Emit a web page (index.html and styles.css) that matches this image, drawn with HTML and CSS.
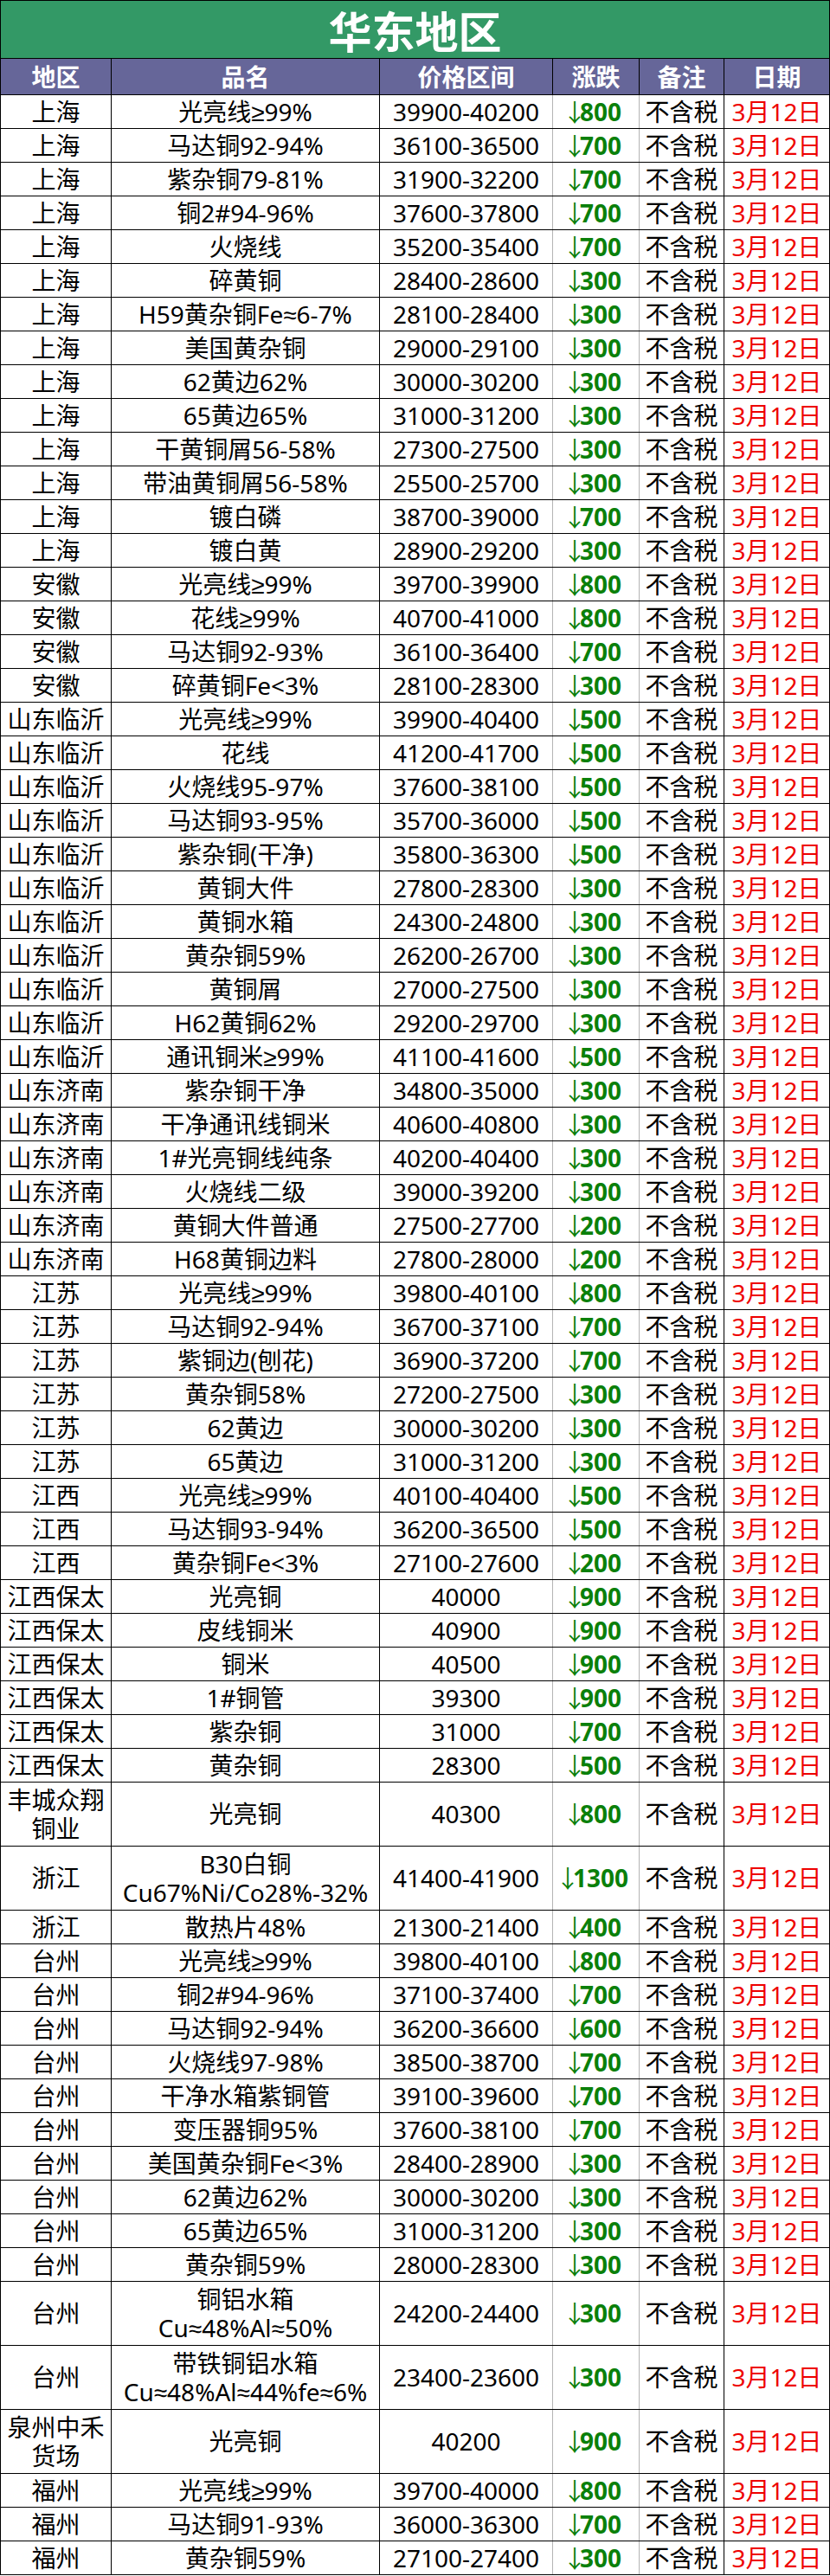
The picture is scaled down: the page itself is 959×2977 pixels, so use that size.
FILE: index.html
```html
<!DOCTYPE html>
<html lang="zh-CN">
<head>
<meta charset="utf-8">
<title>华东地区</title>
<link rel="stylesheet" href="styles.css">
</head>
<body>
<div class="sheet">
  <div class="title">华东地区</div>
  <div class="row head"><div class="c">地区</div><div class="c">品名</div><div class="c">价格区间</div><div class="c">涨跌</div><div class="c">备注</div><div class="c">日期</div></div>

  <div class="row"><div class="c">上海</div><div class="c">光亮线≥99%</div><div class="c">39900-40200</div><div class="c chg"><span class="arr">↓</span>800</div><div class="c">不含税</div><div class="c date">3月12日</div></div>
  <div class="row"><div class="c">上海</div><div class="c">马达铜92-94%</div><div class="c">36100-36500</div><div class="c chg"><span class="arr">↓</span>700</div><div class="c">不含税</div><div class="c date">3月12日</div></div>
  <div class="row"><div class="c">上海</div><div class="c">紫杂铜79-81%</div><div class="c">31900-32200</div><div class="c chg"><span class="arr">↓</span>700</div><div class="c">不含税</div><div class="c date">3月12日</div></div>
  <div class="row"><div class="c">上海</div><div class="c">铜2#94-96%</div><div class="c">37600-37800</div><div class="c chg"><span class="arr">↓</span>700</div><div class="c">不含税</div><div class="c date">3月12日</div></div>
  <div class="row"><div class="c">上海</div><div class="c">火烧线</div><div class="c">35200-35400</div><div class="c chg"><span class="arr">↓</span>700</div><div class="c">不含税</div><div class="c date">3月12日</div></div>
  <div class="row"><div class="c">上海</div><div class="c">碎黄铜</div><div class="c">28400-28600</div><div class="c chg"><span class="arr">↓</span>300</div><div class="c">不含税</div><div class="c date">3月12日</div></div>
  <div class="row"><div class="c">上海</div><div class="c">H59黄杂铜Fe≈6-7%</div><div class="c">28100-28400</div><div class="c chg"><span class="arr">↓</span>300</div><div class="c">不含税</div><div class="c date">3月12日</div></div>
  <div class="row"><div class="c">上海</div><div class="c">美国黄杂铜</div><div class="c">29000-29100</div><div class="c chg"><span class="arr">↓</span>300</div><div class="c">不含税</div><div class="c date">3月12日</div></div>
  <div class="row"><div class="c">上海</div><div class="c">62黄边62%</div><div class="c">30000-30200</div><div class="c chg"><span class="arr">↓</span>300</div><div class="c">不含税</div><div class="c date">3月12日</div></div>
  <div class="row"><div class="c">上海</div><div class="c">65黄边65%</div><div class="c">31000-31200</div><div class="c chg"><span class="arr">↓</span>300</div><div class="c">不含税</div><div class="c date">3月12日</div></div>
  <div class="row"><div class="c">上海</div><div class="c">干黄铜屑56-58%</div><div class="c">27300-27500</div><div class="c chg"><span class="arr">↓</span>300</div><div class="c">不含税</div><div class="c date">3月12日</div></div>
  <div class="row"><div class="c">上海</div><div class="c">带油黄铜屑56-58%</div><div class="c">25500-25700</div><div class="c chg"><span class="arr">↓</span>300</div><div class="c">不含税</div><div class="c date">3月12日</div></div>
  <div class="row"><div class="c">上海</div><div class="c">镀白磷</div><div class="c">38700-39000</div><div class="c chg"><span class="arr">↓</span>700</div><div class="c">不含税</div><div class="c date">3月12日</div></div>
  <div class="row"><div class="c">上海</div><div class="c">镀白黄</div><div class="c">28900-29200</div><div class="c chg"><span class="arr">↓</span>300</div><div class="c">不含税</div><div class="c date">3月12日</div></div>

  <div class="row"><div class="c">安徽</div><div class="c">光亮线≥99%</div><div class="c">39700-39900</div><div class="c chg"><span class="arr">↓</span>800</div><div class="c">不含税</div><div class="c date">3月12日</div></div>
  <div class="row"><div class="c">安徽</div><div class="c">花线≥99%</div><div class="c">40700-41000</div><div class="c chg"><span class="arr">↓</span>800</div><div class="c">不含税</div><div class="c date">3月12日</div></div>
  <div class="row"><div class="c">安徽</div><div class="c">马达铜92-93%</div><div class="c">36100-36400</div><div class="c chg"><span class="arr">↓</span>700</div><div class="c">不含税</div><div class="c date">3月12日</div></div>
  <div class="row"><div class="c">安徽</div><div class="c">碎黄铜Fe&lt;3%</div><div class="c">28100-28300</div><div class="c chg"><span class="arr">↓</span>300</div><div class="c">不含税</div><div class="c date">3月12日</div></div>

  <div class="row"><div class="c">山东临沂</div><div class="c">光亮线≥99%</div><div class="c">39900-40400</div><div class="c chg"><span class="arr">↓</span>500</div><div class="c">不含税</div><div class="c date">3月12日</div></div>
  <div class="row"><div class="c">山东临沂</div><div class="c">花线</div><div class="c">41200-41700</div><div class="c chg"><span class="arr">↓</span>500</div><div class="c">不含税</div><div class="c date">3月12日</div></div>
  <div class="row"><div class="c">山东临沂</div><div class="c">火烧线95-97%</div><div class="c">37600-38100</div><div class="c chg"><span class="arr">↓</span>500</div><div class="c">不含税</div><div class="c date">3月12日</div></div>
  <div class="row"><div class="c">山东临沂</div><div class="c">马达铜93-95%</div><div class="c">35700-36000</div><div class="c chg"><span class="arr">↓</span>500</div><div class="c">不含税</div><div class="c date">3月12日</div></div>
  <div class="row"><div class="c">山东临沂</div><div class="c">紫杂铜(干净)</div><div class="c">35800-36300</div><div class="c chg"><span class="arr">↓</span>500</div><div class="c">不含税</div><div class="c date">3月12日</div></div>
  <div class="row"><div class="c">山东临沂</div><div class="c">黄铜大件</div><div class="c">27800-28300</div><div class="c chg"><span class="arr">↓</span>300</div><div class="c">不含税</div><div class="c date">3月12日</div></div>
  <div class="row"><div class="c">山东临沂</div><div class="c">黄铜水箱</div><div class="c">24300-24800</div><div class="c chg"><span class="arr">↓</span>300</div><div class="c">不含税</div><div class="c date">3月12日</div></div>
  <div class="row"><div class="c">山东临沂</div><div class="c">黄杂铜59%</div><div class="c">26200-26700</div><div class="c chg"><span class="arr">↓</span>300</div><div class="c">不含税</div><div class="c date">3月12日</div></div>
  <div class="row"><div class="c">山东临沂</div><div class="c">黄铜屑</div><div class="c">27000-27500</div><div class="c chg"><span class="arr">↓</span>300</div><div class="c">不含税</div><div class="c date">3月12日</div></div>
  <div class="row"><div class="c">山东临沂</div><div class="c">H62黄铜62%</div><div class="c">29200-29700</div><div class="c chg"><span class="arr">↓</span>300</div><div class="c">不含税</div><div class="c date">3月12日</div></div>
  <div class="row"><div class="c">山东临沂</div><div class="c">通讯铜米≥99%</div><div class="c">41100-41600</div><div class="c chg"><span class="arr">↓</span>500</div><div class="c">不含税</div><div class="c date">3月12日</div></div>

  <div class="row"><div class="c">山东济南</div><div class="c">紫杂铜干净</div><div class="c">34800-35000</div><div class="c chg"><span class="arr">↓</span>300</div><div class="c">不含税</div><div class="c date">3月12日</div></div>
  <div class="row"><div class="c">山东济南</div><div class="c">干净通讯线铜米</div><div class="c">40600-40800</div><div class="c chg"><span class="arr">↓</span>300</div><div class="c">不含税</div><div class="c date">3月12日</div></div>
  <div class="row"><div class="c">山东济南</div><div class="c">1#光亮铜线纯条</div><div class="c">40200-40400</div><div class="c chg"><span class="arr">↓</span>300</div><div class="c">不含税</div><div class="c date">3月12日</div></div>
  <div class="row"><div class="c">山东济南</div><div class="c">火烧线二级</div><div class="c">39000-39200</div><div class="c chg"><span class="arr">↓</span>300</div><div class="c">不含税</div><div class="c date">3月12日</div></div>
  <div class="row"><div class="c">山东济南</div><div class="c">黄铜大件普通</div><div class="c">27500-27700</div><div class="c chg"><span class="arr">↓</span>200</div><div class="c">不含税</div><div class="c date">3月12日</div></div>
  <div class="row"><div class="c">山东济南</div><div class="c">H68黄铜边料</div><div class="c">27800-28000</div><div class="c chg"><span class="arr">↓</span>200</div><div class="c">不含税</div><div class="c date">3月12日</div></div>

  <div class="row"><div class="c">江苏</div><div class="c">光亮线≥99%</div><div class="c">39800-40100</div><div class="c chg"><span class="arr">↓</span>800</div><div class="c">不含税</div><div class="c date">3月12日</div></div>
  <div class="row"><div class="c">江苏</div><div class="c">马达铜92-94%</div><div class="c">36700-37100</div><div class="c chg"><span class="arr">↓</span>700</div><div class="c">不含税</div><div class="c date">3月12日</div></div>
  <div class="row"><div class="c">江苏</div><div class="c">紫铜边(刨花)</div><div class="c">36900-37200</div><div class="c chg"><span class="arr">↓</span>700</div><div class="c">不含税</div><div class="c date">3月12日</div></div>
  <div class="row"><div class="c">江苏</div><div class="c">黄杂铜58%</div><div class="c">27200-27500</div><div class="c chg"><span class="arr">↓</span>300</div><div class="c">不含税</div><div class="c date">3月12日</div></div>
  <div class="row"><div class="c">江苏</div><div class="c">62黄边</div><div class="c">30000-30200</div><div class="c chg"><span class="arr">↓</span>300</div><div class="c">不含税</div><div class="c date">3月12日</div></div>
  <div class="row"><div class="c">江苏</div><div class="c">65黄边</div><div class="c">31000-31200</div><div class="c chg"><span class="arr">↓</span>300</div><div class="c">不含税</div><div class="c date">3月12日</div></div>

  <div class="row"><div class="c">江西</div><div class="c">光亮线≥99%</div><div class="c">40100-40400</div><div class="c chg"><span class="arr">↓</span>500</div><div class="c">不含税</div><div class="c date">3月12日</div></div>
  <div class="row"><div class="c">江西</div><div class="c">马达铜93-94%</div><div class="c">36200-36500</div><div class="c chg"><span class="arr">↓</span>500</div><div class="c">不含税</div><div class="c date">3月12日</div></div>
  <div class="row"><div class="c">江西</div><div class="c">黄杂铜Fe&lt;3%</div><div class="c">27100-27600</div><div class="c chg"><span class="arr">↓</span>200</div><div class="c">不含税</div><div class="c date">3月12日</div></div>

  <div class="row"><div class="c">江西保太</div><div class="c">光亮铜</div><div class="c">40000</div><div class="c chg"><span class="arr">↓</span>900</div><div class="c">不含税</div><div class="c date">3月12日</div></div>
  <div class="row"><div class="c">江西保太</div><div class="c">皮线铜米</div><div class="c">40900</div><div class="c chg"><span class="arr">↓</span>900</div><div class="c">不含税</div><div class="c date">3月12日</div></div>
  <div class="row"><div class="c">江西保太</div><div class="c">铜米</div><div class="c">40500</div><div class="c chg"><span class="arr">↓</span>900</div><div class="c">不含税</div><div class="c date">3月12日</div></div>
  <div class="row"><div class="c">江西保太</div><div class="c">1#铜管</div><div class="c">39300</div><div class="c chg"><span class="arr">↓</span>900</div><div class="c">不含税</div><div class="c date">3月12日</div></div>
  <div class="row"><div class="c">江西保太</div><div class="c">紫杂铜</div><div class="c">31000</div><div class="c chg"><span class="arr">↓</span>700</div><div class="c">不含税</div><div class="c date">3月12日</div></div>
  <div class="row"><div class="c">江西保太</div><div class="c">黄杂铜</div><div class="c">28300</div><div class="c chg"><span class="arr">↓</span>500</div><div class="c">不含税</div><div class="c date">3月12日</div></div>

  <div class="row tall"><div class="c">丰城众翔<br>铜业</div><div class="c">光亮铜</div><div class="c">40300</div><div class="c chg"><span class="arr">↓</span>800</div><div class="c">不含税</div><div class="c date">3月12日</div></div>

  <div class="row tall"><div class="c">浙江</div><div class="c">B30白铜<br>Cu67%Ni/Co28%-32%</div><div class="c">41400-41900</div><div class="c chg"><span class="arr">↓</span>1300</div><div class="c">不含税</div><div class="c date">3月12日</div></div>
  <div class="row"><div class="c">浙江</div><div class="c">散热片48%</div><div class="c">21300-21400</div><div class="c chg"><span class="arr">↓</span>400</div><div class="c">不含税</div><div class="c date">3月12日</div></div>

  <div class="row"><div class="c">台州</div><div class="c">光亮线≥99%</div><div class="c">39800-40100</div><div class="c chg"><span class="arr">↓</span>800</div><div class="c">不含税</div><div class="c date">3月12日</div></div>
  <div class="row"><div class="c">台州</div><div class="c">铜2#94-96%</div><div class="c">37100-37400</div><div class="c chg"><span class="arr">↓</span>700</div><div class="c">不含税</div><div class="c date">3月12日</div></div>
  <div class="row"><div class="c">台州</div><div class="c">马达铜92-94%</div><div class="c">36200-36600</div><div class="c chg"><span class="arr">↓</span>600</div><div class="c">不含税</div><div class="c date">3月12日</div></div>
  <div class="row"><div class="c">台州</div><div class="c">火烧线97-98%</div><div class="c">38500-38700</div><div class="c chg"><span class="arr">↓</span>700</div><div class="c">不含税</div><div class="c date">3月12日</div></div>
  <div class="row"><div class="c">台州</div><div class="c">干净水箱紫铜管</div><div class="c">39100-39600</div><div class="c chg"><span class="arr">↓</span>700</div><div class="c">不含税</div><div class="c date">3月12日</div></div>
  <div class="row"><div class="c">台州</div><div class="c">变压器铜95%</div><div class="c">37600-38100</div><div class="c chg"><span class="arr">↓</span>700</div><div class="c">不含税</div><div class="c date">3月12日</div></div>
  <div class="row"><div class="c">台州</div><div class="c">美国黄杂铜Fe&lt;3%</div><div class="c">28400-28900</div><div class="c chg"><span class="arr">↓</span>300</div><div class="c">不含税</div><div class="c date">3月12日</div></div>
  <div class="row"><div class="c">台州</div><div class="c">62黄边62%</div><div class="c">30000-30200</div><div class="c chg"><span class="arr">↓</span>300</div><div class="c">不含税</div><div class="c date">3月12日</div></div>
  <div class="row"><div class="c">台州</div><div class="c">65黄边65%</div><div class="c">31000-31200</div><div class="c chg"><span class="arr">↓</span>300</div><div class="c">不含税</div><div class="c date">3月12日</div></div>
  <div class="row"><div class="c">台州</div><div class="c">黄杂铜59%</div><div class="c">28000-28300</div><div class="c chg"><span class="arr">↓</span>300</div><div class="c">不含税</div><div class="c date">3月12日</div></div>
  <div class="row tall"><div class="c">台州</div><div class="c">铜铝水箱<br>Cu≈48%Al≈50%</div><div class="c">24200-24400</div><div class="c chg"><span class="arr">↓</span>300</div><div class="c">不含税</div><div class="c date">3月12日</div></div>
  <div class="row tall"><div class="c">台州</div><div class="c">带铁铜铝水箱<br>Cu≈48%Al≈44%fe≈6%</div><div class="c">23400-23600</div><div class="c chg"><span class="arr">↓</span>300</div><div class="c">不含税</div><div class="c date">3月12日</div></div>

  <div class="row tall"><div class="c">泉州中禾<br>货场</div><div class="c">光亮铜</div><div class="c">40200</div><div class="c chg"><span class="arr">↓</span>900</div><div class="c">不含税</div><div class="c date">3月12日</div></div>

  <div class="row"><div class="c">福州</div><div class="c">光亮线≥99%</div><div class="c">39700-40000</div><div class="c chg"><span class="arr">↓</span>800</div><div class="c">不含税</div><div class="c date">3月12日</div></div>
  <div class="row"><div class="c">福州</div><div class="c">马达铜91-93%</div><div class="c">36000-36300</div><div class="c chg"><span class="arr">↓</span>700</div><div class="c">不含税</div><div class="c date">3月12日</div></div>
  <div class="row"><div class="c">福州</div><div class="c">黄杂铜59%</div><div class="c">27100-27400</div><div class="c chg"><span class="arr">↓</span>300</div><div class="c">不含税</div><div class="c date">3月12日</div></div>
</div>
</body>
</html>
```

FILE: styles.css
```css
html, body {
  margin: 0;
  padding: 0;
  background: #ffffff;
}

.sheet {
  width: 959px;
  box-sizing: border-box;
  border: 1px solid #000000;
  border-bottom: none;
  font-family: "Noto Sans", "Liberation Sans", "Noto Sans CJK SC", sans-serif;
  color: #000000;
}

.title {
  height: 67px;
  box-sizing: border-box;
  border-bottom: 1px solid #000000;
  background: #339966;
  color: #ffffff;
  font-family: "Noto Sans CJK SC", sans-serif;
  font-weight: 700;
  font-size: 50px;
  display: flex;
  align-items: center;
  justify-content: center;
}

.row {
  display: grid;
  grid-template-columns: 128px 310px 200px 100px 98px 1fr;
  height: 39px;
  box-sizing: border-box;
  border-bottom: 1px solid #000000;
}

.row.tall {
  height: 74px;
}

.c {
  display: flex;
  align-items: center;
  justify-content: center;
  text-align: center;
  border-right: 1px solid #000000;
  font-size: 28px;
  line-height: 33px;
  white-space: nowrap;
  overflow: hidden;
}

.c:last-child {
  border-right: none;
}

.row .c:nth-child(3),
.row .c:nth-child(4) {
  border-right-color: #b4b4b4;
}

.head {
  height: 42px;
  background: #666699;
  color: #ffffff;
  font-weight: 700;
}

.head .c {
  font-family: "Noto Sans CJK SC", sans-serif;
}

.row.head .c:nth-child(3),
.row.head .c:nth-child(4) {
  border-right-color: #000000;
}

.chg {
  color: #0a800a;
  font-weight: 700;
}

.arr {
  font-family: "Noto Sans CJK SC", sans-serif;
  font-weight: 400;
  letter-spacing: -8px;
  margin-left: -9px;
}

.date {
  color: #ee0000;
}
```
